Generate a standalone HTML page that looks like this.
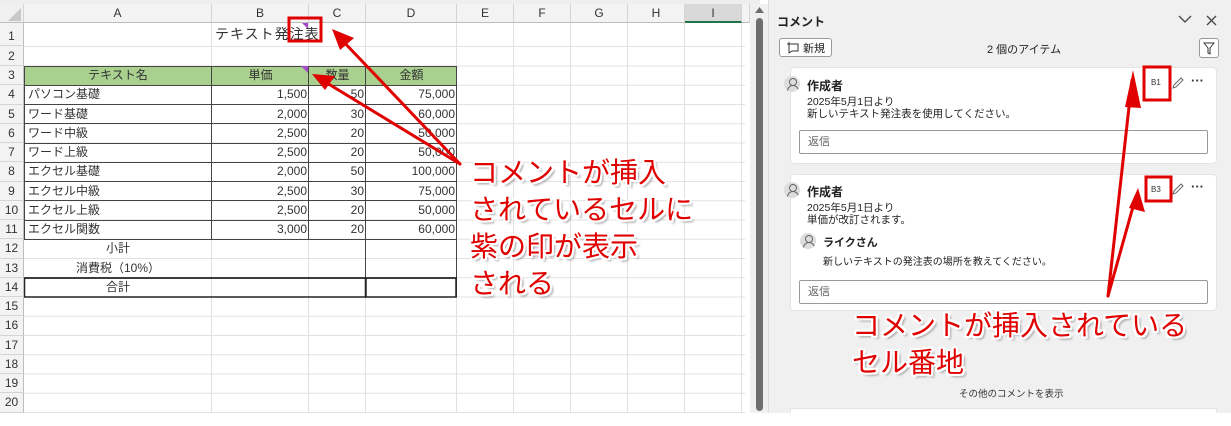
<!DOCTYPE html>
<html><head><meta charset="utf-8"><style>
*{margin:0;padding:0;box-sizing:border-box}
body{width:1231px;height:426px;background:#fff;position:relative;overflow:hidden;font-family:"Liberation Sans","Noto Sans CJK JP",sans-serif;font-size:12px;color:#222}
.a{position:absolute}
.ch{position:absolute;top:4px;height:19px;background:#f3f3f3;border-right:1px solid #d4d4d4;border-bottom:1px solid #bdbdbd;text-align:center;line-height:19px;font-size:12px;color:#333}
.rh{position:absolute;left:0;width:24px;background:#f3f3f3;border-bottom:1px solid #d4d4d4;border-right:1px solid #bdbdbd;text-align:center;font-size:12px;color:#333}
.c{position:absolute;font-size:12px;line-height:19px;white-space:nowrap;color:#333}
.r{text-align:right}
.big{position:absolute;font-size:28px;color:#e00000;font-family:"Noto Sans CJK JP",sans-serif;line-height:37px;white-space:nowrap;text-shadow:2px 0 #fff,-2px 0 #fff,0 2px #fff,0 -2px #fff,2px 2px #fff,-2px -2px #fff,2px -2px #fff,-2px 2px #fff,3px 3px 2px #999}
.card{position:absolute;left:790px;width:427px;background:#fff;border:1px solid #e4e4e4;border-radius:4px}
.reply{position:absolute;left:799px;width:409px;height:24px;border:1px solid #999;border-radius:2px;background:#fff;font-size:11px;color:#666;padding-left:8px;line-height:22px}
.av{position:absolute;width:16px;height:16px;border-radius:50%;background:#ddd;overflow:hidden}
.av:before{content:"";position:absolute;left:5px;top:2px;width:6px;height:6px;border:1px solid #666;border-radius:50%}
.av:after{content:"";position:absolute;left:3px;top:9px;width:10px;height:8px;border:1px solid #666;border-radius:6px 6px 0 0}
.t{position:absolute;font-size:11px;color:#222;white-space:nowrap}
</style></head><body>
<!-- grid lines -->
<svg class="a" style="left:0;top:0" width="760" height="426">
<g stroke="#e1e1e1" stroke-width="1">
<line x1="211.5" y1="23" x2="211.5" y2="413"/><line x1="308.5" y1="23" x2="308.5" y2="413"/><line x1="365.5" y1="23" x2="365.5" y2="413"/><line x1="456.5" y1="23" x2="456.5" y2="413"/><line x1="513.5" y1="23" x2="513.5" y2="413"/><line x1="570.5" y1="23" x2="570.5" y2="413"/><line x1="627.5" y1="23" x2="627.5" y2="413"/><line x1="684.5" y1="23" x2="684.5" y2="413"/><line x1="741.5" y1="23" x2="741.5" y2="413"/>
<line x1="24" y1="46.5" x2="745" y2="46.5"/><line x1="24" y1="66" x2="745" y2="66"/><line x1="24" y1="85.25" x2="745" y2="85.25"/><line x1="24" y1="104.5" x2="745" y2="104.5"/><line x1="24" y1="123.75" x2="745" y2="123.75"/><line x1="24" y1="143" x2="745" y2="143"/><line x1="24" y1="162.25" x2="745" y2="162.25"/><line x1="24" y1="181.5" x2="745" y2="181.5"/><line x1="24" y1="200.75" x2="745" y2="200.75"/><line x1="24" y1="220" x2="745" y2="220"/><line x1="24" y1="239.25" x2="745" y2="239.25"/><line x1="24" y1="258.5" x2="745" y2="258.5"/><line x1="24" y1="277.75" x2="745" y2="277.75"/><line x1="24" y1="297" x2="745" y2="297"/><line x1="24" y1="316.25" x2="745" y2="316.25"/><line x1="24" y1="335.5" x2="745" y2="335.5"/><line x1="24" y1="354.75" x2="745" y2="354.75"/><line x1="24" y1="374" x2="745" y2="374"/><line x1="24" y1="393.25" x2="745" y2="393.25"/><line x1="24" y1="412.5" x2="745" y2="412.5"/>
</g>
<rect x="24.5" y="66.5" width="432" height="19" fill="#a9d08e"/>
<g stroke="#444" stroke-width="1" fill="none">
<rect x="24.5" y="66.5" width="432" height="173"/>
<line x1="211.5" y1="66" x2="211.5" y2="239"/><line x1="308.5" y1="66" x2="308.5" y2="239"/><line x1="365.5" y1="66" x2="365.5" y2="297"/><line x1="456.5" y1="239" x2="456.5" y2="297"/>
<line x1="24" y1="85.5" x2="457" y2="85.5"/><line x1="24" y1="104.5" x2="457" y2="104.5"/><line x1="24" y1="123.5" x2="457" y2="123.5"/><line x1="24" y1="143.5" x2="457" y2="143.5"/><line x1="24" y1="162.5" x2="457" y2="162.5"/><line x1="24" y1="181.5" x2="457" y2="181.5"/><line x1="24" y1="200.5" x2="457" y2="200.5"/><line x1="24" y1="220.5" x2="457" y2="220.5"/>
</g>
<line x1="24" y1="278" x2="457" y2="278" stroke="#222" stroke-width="1.5"/>
<rect x="24.5" y="278" width="341" height="19" fill="none" stroke="#222" stroke-width="1.5"/>
<rect x="366" y="278" width="90" height="19" fill="none" stroke="#222" stroke-width="1.5"/>
<polygon points="301,66 308,66 308,73" fill="#a64bc9"/>
<polygon points="302,23 308,23 308,29" fill="#a64bc9"/>
</svg>
<div class="a" style="left:0;top:0;width:760px;height:4px;background:#eee"></div>
<div class="ch" style="left:0;width:24px;background:#f0f0f0"></div>
<svg class="a" style="left:8px;top:8px" width="14" height="14"><polygon points="13,0 13,13 0,13" fill="#c8c8c8"/></svg>
<div class="ch" style="left:24px;width:188px">A</div><div class="ch" style="left:212px;width:97px">B</div><div class="ch" style="left:309px;width:57px">C</div><div class="ch" style="left:366px;width:91px">D</div><div class="ch" style="left:457px;width:57px">E</div><div class="ch" style="left:514px;width:57px">F</div><div class="ch" style="left:571px;width:57px">G</div><div class="ch" style="left:628px;width:57px">H</div><div class="ch" style="left:685px;width:57px;background:#d9d9d9;border-bottom:2px solid #217346">I</div><div class="ch" style="left:742px;width:8px"></div>
<div class="rh" style="top:23px;height:23px;line-height:26px">1</div>
<div class="rh" style="top:46px;height:20px;line-height:20px">2</div>
<div class="rh" style="top:66px;height:19.25px;line-height:19px">3</div>
<div class="rh" style="top:85.25px;height:19.25px;line-height:19px">4</div>
<div class="rh" style="top:104.5px;height:19.25px;line-height:19px">5</div>
<div class="rh" style="top:123.75px;height:19.25px;line-height:19px">6</div>
<div class="rh" style="top:143px;height:19.25px;line-height:19px">7</div>
<div class="rh" style="top:162.25px;height:19.25px;line-height:19px">8</div>
<div class="rh" style="top:181.5px;height:19.25px;line-height:19px">9</div>
<div class="rh" style="top:200.75px;height:19.25px;line-height:19px">10</div>
<div class="rh" style="top:220px;height:19.25px;line-height:19px">11</div>
<div class="rh" style="top:239.25px;height:19.25px;line-height:19px">12</div>
<div class="rh" style="top:258.5px;height:19.25px;line-height:19px">13</div>
<div class="rh" style="top:277.75px;height:19.25px;line-height:19px">14</div>
<div class="rh" style="top:297px;height:19.25px;line-height:19px">15</div>
<div class="rh" style="top:316.25px;height:19.25px;line-height:19px">16</div>
<div class="rh" style="top:335.5px;height:19.25px;line-height:19px">17</div>
<div class="rh" style="top:354.75px;height:19.25px;line-height:19px">18</div>
<div class="rh" style="top:374px;height:19.25px;line-height:19px">19</div>
<div class="rh" style="top:393.25px;height:19.25px;line-height:19px">20</div>
<div class="c" style="left:215px;top:24px;font-size:14px;line-height:20px;letter-spacing:1px">テキスト発注表</div>
<div class="c" style="left:24px;top:66px;width:188px;text-align:center">テキスト名</div>
<div class="c" style="left:212px;top:66px;width:97px;text-align:center">単価</div>
<div class="c" style="left:309px;top:66px;width:57px;text-align:center">数量</div>
<div class="c" style="left:366px;top:66px;width:91px;text-align:center">金額</div>
<div class="c" style="left:28px;top:85px">パソコン基礎</div><div class="c r" style="left:212px;width:95px;top:85px">1,500</div><div class="c r" style="left:309px;width:55px;top:85px">50</div><div class="c r" style="left:366px;width:89px;top:85px">75,000</div>
<div class="c" style="left:28px;top:104.5px">ワード基礎</div><div class="c r" style="left:212px;width:95px;top:104.5px">2,000</div><div class="c r" style="left:309px;width:55px;top:104.5px">30</div><div class="c r" style="left:366px;width:89px;top:104.5px">60,000</div>
<div class="c" style="left:28px;top:123.75px">ワード中級</div><div class="c r" style="left:212px;width:95px;top:123.75px">2,500</div><div class="c r" style="left:309px;width:55px;top:123.75px">20</div><div class="c r" style="left:366px;width:89px;top:123.75px">50,000</div>
<div class="c" style="left:28px;top:143px">ワード上級</div><div class="c r" style="left:212px;width:95px;top:143px">2,500</div><div class="c r" style="left:309px;width:55px;top:143px">20</div><div class="c r" style="left:366px;width:89px;top:143px">50,000</div>
<div class="c" style="left:28px;top:162.25px">エクセル基礎</div><div class="c r" style="left:212px;width:95px;top:162.25px">2,000</div><div class="c r" style="left:309px;width:55px;top:162.25px">50</div><div class="c r" style="left:366px;width:89px;top:162.25px">100,000</div>
<div class="c" style="left:28px;top:181.5px">エクセル中級</div><div class="c r" style="left:212px;width:95px;top:181.5px">2,500</div><div class="c r" style="left:309px;width:55px;top:181.5px">30</div><div class="c r" style="left:366px;width:89px;top:181.5px">75,000</div>
<div class="c" style="left:28px;top:200.75px">エクセル上級</div><div class="c r" style="left:212px;width:95px;top:200.75px">2,500</div><div class="c r" style="left:309px;width:55px;top:200.75px">20</div><div class="c r" style="left:366px;width:89px;top:200.75px">50,000</div>
<div class="c" style="left:28px;top:220px">エクセル関数</div><div class="c r" style="left:212px;width:95px;top:220px">3,000</div><div class="c r" style="left:309px;width:55px;top:220px">20</div><div class="c r" style="left:366px;width:89px;top:220px">60,000</div>
<div class="c" style="left:24px;width:188px;text-align:center;top:239.25px">小計</div>
<div class="c" style="left:24px;width:188px;text-align:center;top:258.5px">消費税（10%）</div>
<div class="c" style="left:24px;width:188px;text-align:center;top:277.75px">合計</div>
<!-- scrollbar -->
<div class="a" style="left:750px;top:4px;width:18px;height:409px;background:#f0f0f0"></div>
<div class="a" style="left:756px;top:18px;width:7px;height:393px;background:#6e6e6e;border-radius:4px"></div>
<svg class="a" style="left:755px;top:7px" width="9" height="6"><polygon points="4.5,0 9,6 0,6" fill="#6e6e6e"/></svg>
<!-- panel -->
<div class="a" style="left:768px;top:0;width:463px;height:413px;background:#f0f0f0;border-left:1px solid #ddd"></div>
<div class="t" style="left:777px;top:13px;font-size:12px;font-weight:bold">コメント</div>
<svg class="a" style="left:1178px;top:15px" width="14" height="9"><polyline points="1,1 7,7 13,1" fill="none" stroke="#444" stroke-width="1.3"/></svg>
<svg class="a" style="left:1206px;top:15px" width="11" height="11"><path d="M1 1L10 10M10 1L1 10" stroke="#444" stroke-width="1.3"/></svg>
<div class="a" style="left:779px;top:38px;width:53px;height:19px;border:1px solid #999;border-radius:3px;background:#fff"></div>
<svg class="a" style="left:786px;top:41px" width="14" height="13"><path d="M3 3H12V10H6L3 12V3M3 1V5M1 3H5" fill="none" stroke="#333" stroke-width="1"/></svg>
<div class="t" style="left:803px;top:40px">新規</div>
<div class="t" style="left:987px;top:41px">2 個のアイテム</div>
<div class="a" style="left:1199px;top:38px;width:20px;height:20px;border:1px solid #999;border-radius:3px;background:#fff"></div>
<svg class="a" style="left:1203px;top:42px" width="12" height="13"><path d="M1 1H11L7 6V12L5 11V6Z" fill="none" stroke="#333"/></svg>
<div class="card" style="top:67px;height:97px"></div>
<div class="av" style="left:784px;top:76px"></div>
<div class="t" style="left:807px;top:77px;font-weight:bold;font-size:12px">作成者</div>
<div class="t" style="left:807px;top:94px;font-size:10.5px">2025年5月1日より</div>
<div class="t" style="left:807px;top:106px;font-size:10.5px">新しいテキスト発注表を使用してください。</div>
<div class="reply" style="top:130px">返信</div>
<div class="card" style="top:174px;height:137px"></div>
<div class="av" style="left:784px;top:182px"></div>
<div class="t" style="left:807px;top:183px;font-weight:bold;font-size:12px">作成者</div>
<div class="t" style="left:807px;top:200px;font-size:10.5px">2025年5月1日より</div>
<div class="t" style="left:807px;top:212px;font-size:10.5px">単価が改訂されます。</div>
<div class="av" style="left:800px;top:233px"></div>
<div class="t" style="left:823px;top:234px;font-weight:bold;font-size:11px">ライクさん</div>
<div class="t" style="left:823px;top:253px;font-size:10px">新しいテキストの発注表の場所を教えてください。</div>
<div class="reply" style="top:280px">返信</div>
<div class="t" style="left:1151px;top:78px;font-size:8px;color:#333">B1</div>
<div class="t" style="left:1151px;top:185px;font-size:8px;color:#333">B3</div>
<svg class="a" style="left:1171px;top:76px" width="14" height="14"><path d="M2 12L3 9L10 2L12 4L5 11Z" fill="none" stroke="#666"/></svg>
<svg class="a" style="left:1171px;top:182px" width="14" height="14"><path d="M2 12L3 9L10 2L12 4L5 11Z" fill="none" stroke="#666"/></svg>
<div class="t" style="left:1191px;top:73px;font-size:13px;font-weight:bold;color:#333">···</div>
<div class="t" style="left:1191px;top:179px;font-size:13px;font-weight:bold;color:#333">···</div>
<div class="t" style="left:959px;top:386px;font-size:9.5px;color:#333">その他のコメントを表示</div>
<div class="a" style="left:790px;top:408px;width:427px;height:10px;background:#fff;border:1px solid #e4e4e4"></div>
<div class="a" style="left:0;top:413px;width:1231px;height:13px;background:#fff"></div>
<!-- annotations -->
<svg class="a" style="left:0;top:0" width="1231" height="426">
<g fill="none" stroke="#e00000" stroke-width="3">
<rect x="289" y="18" width="32" height="23"/>
<rect x="1144" y="67" width="26" height="33"/>
<rect x="1146" y="177" width="25" height="24"/>
</g>
<g stroke="#e00000" stroke-width="3" stroke-linecap="round">
<line x1="460" y1="164" x2="340" y2="38"/>
<line x1="460" y1="164" x2="322" y2="80"/>
<line x1="1108" y1="296" x2="1132" y2="80"/>
<line x1="1108" y1="296" x2="1136" y2="196"/>
</g>
<g fill="#e00000">
<polygon points="332,29 354,38 340,50"/>
<polygon points="312,74 335,76 325,90"/>
<polygon points="1133,70 1141,108 1125,107"/>
<polygon points="1138,188 1145,212 1129,208"/>
</g>
</svg>
<div class="big" style="left:470px;top:153px">コメントが挿入</div>
<div class="big" style="left:470px;top:190px">されているセルに</div>
<div class="big" style="left:470px;top:227px">紫の印が表示</div>
<div class="big" style="left:470px;top:264px">される</div>
<div class="big" style="left:852px;top:306px">コメントが挿入されている</div>
<div class="big" style="left:852px;top:343px">セル番地</div>
</body></html>
